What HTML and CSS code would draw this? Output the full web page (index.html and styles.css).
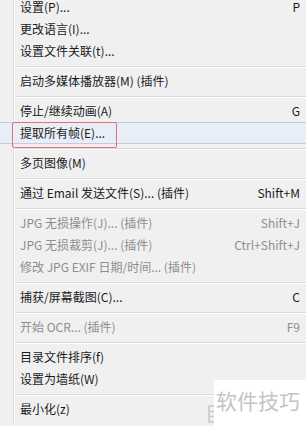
FILE: index.html
```html
<!DOCTYPE html>
<html lang="zh-CN">
<head>
<meta charset="utf-8">
<link rel="stylesheet" href="styles.css">
</head>
<body>
<div class="menu">
  <div class="item first"><span class="label">设置(P)...</span><span class="key">P</span></div>
  <div class="item"><span class="label">更改语言(I)...</span></div>
  <div class="item"><span class="label">设置文件关联(t)...</span></div>
  <div class="sep"></div>
  <div class="item"><span class="label">启动多媒体播放器(M) (插件)</span></div>
  <div class="sep"></div>
  <div class="item"><span class="label">停止/继续动画(A)</span><span class="key">G</span></div>
  <div class="item hover"><span class="label">提取所有帧(E)...</span><span class="mark"></span></div>
  <div class="sep"></div>
  <div class="item"><span class="label">多页图像(M)</span></div>
  <div class="sep"></div>
  <div class="item"><span class="label">通过 Email 发送文件(S)... (插件)</span><span class="key">Shift+M</span></div>
  <div class="sep"></div>
  <div class="item off"><span class="label">JPG 无损操作(J)... (插件)</span><span class="key">Shift+J</span></div>
  <div class="item off"><span class="label">JPG 无损裁剪(J)... (插件)</span><span class="key">Ctrl+Shift+J</span></div>
  <div class="item off"><span class="label">修改 JPG EXIF 日期/时间... (插件)</span></div>
  <div class="sep"></div>
  <div class="item"><span class="label">捕获/屏幕截图(C)...</span><span class="key">C</span></div>
  <div class="sep"></div>
  <div class="item off"><span class="label">开始 OCR... (插件)</span><span class="key">F9</span></div>
  <div class="sep"></div>
  <div class="item"><span class="label">目录文件排序(f)</span></div>
  <div class="item"><span class="label">设置为墙纸(W)</span></div>
  <div class="sep"></div>
  <div class="item"><span class="label">最小化(z)</span></div>
</div>
<div class="watermark">
  <svg class="wm-icon" width="12" height="18" viewBox="0 0 12 18" aria-hidden="true">
    <rect x="1" y="1" width="10" height="16" fill="none" stroke="#c8c8c8" stroke-width="1.5"/>
    <line x1="1" y1="6.5" x2="11" y2="6.5" stroke="#c8c8c8" stroke-width="1.5"/>
    <line x1="1" y1="11.5" x2="11" y2="11.5" stroke="#c8c8c8" stroke-width="1.5"/>
  </svg>
  <div class="wm-box"><span class="wm-text">软件技巧</span></div>
</div>
</body>
</html>
```
FILE: styles.css
```css
html, body {
  margin: 0;
  padding: 0;
  background: #f0f0f0;
}
body {
  width: 306px;
  height: 426px;
  overflow: hidden;
  position: relative;
  font-family: "Noto Sans CJK SC", "Microsoft YaHei", "Noto Sans", sans-serif;
  font-size: 12px;
  color: #1b1b1b;
}
.menu {
  display: flex;
  flex-direction: column;
  background: linear-gradient(to right, #f0f0f0 0, #f0f0f0 13px, #dcdcdc 13px, #dcdcdc 14px, #ffffff 14px, #ffffff 15px, #f0f0f0 15px);
  min-height: 436px;
}
.item {
  height: 22px;
  box-sizing: border-box;
  display: flex;
  align-items: center;
  justify-content: space-between;
  padding: 0 6px 0 20px;
  line-height: 22px;
  white-space: nowrap;
  position: relative;
}
.item.first {
  height: 18px;
  line-height: 14px;
  align-items: flex-start;
}
.item.off {
  color: #8e8e8e;
}
.item.hover {
  background: #e8edf6;
  border-top: 1px solid #bccce9;
  border-bottom: 1px solid #bccce9;
}
.key {
  text-align: right;
}
.mark {
  position: absolute;
  left: 12px;
  top: -1px;
  width: 105px;
  height: 26px;
  box-sizing: border-box;
  border: 1.5px solid #e0737a;
  border-radius: 2px;
}
.sep {
  height: 8px;
  box-sizing: border-box;
  margin-left: 15px;
  padding-top: 4px;
}
.sep::before {
  content: "";
  display: block;
  height: 1px;
  background: #d9d9d9;
  border-bottom: 1px solid #ffffff;
}
.watermark {
  position: absolute;
  right: 0;
  bottom: 0;
  display: flex;
  align-items: flex-end;
}
.wm-icon {
  margin: 0 -6px 3px 0;
}
.wm-box {
  width: 92px;
  height: 46px;
  background: #ffffff;
  display: flex;
  align-items: flex-start;
  justify-content: flex-start;
  box-sizing: border-box;
  padding: 8px 0 0 2px;
  position: relative;
}
.wm-text {
  font-size: 21px;
  line-height: 24px;
  color: #c4c4c4;
}
```
